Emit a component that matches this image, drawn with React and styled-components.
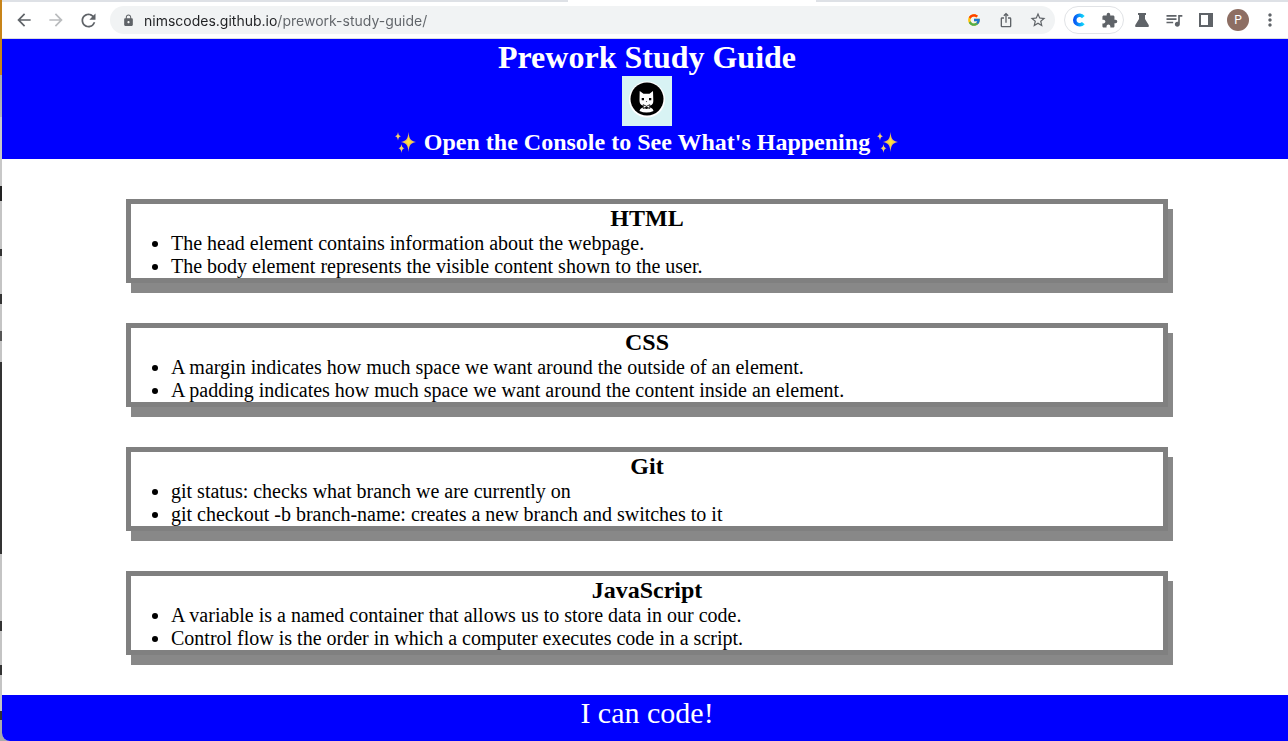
import React from 'react';
import styled, { createGlobalStyle, css } from 'styled-components';
import {
  MdArrowBack, MdArrowForward, MdRefresh, MdLock, MdIosShare, MdStarBorder,
  MdExtension, MdQueueMusic, MdMoreVert,
} from 'react-icons/md';
import { FcGoogle } from 'react-icons/fc';

const GlobalStyle = createGlobalStyle`
  * { box-sizing: border-box; margin: 0; padding: 0; }
  body { background: #fff; font-family: "Liberation Serif", "Times New Roman", serif; }
`;

const Desktop = styled.div`
  display: flex;
  min-height: 100vh;
  overflow: hidden;
  background: linear-gradient(#c88419 75px, #aaa 75px, #b4b4b4 117px, #c8c8c8 117px, #c8c8c8 186px,
    #222 186px, #222 201px, #c4c4c4 201px, #c4c4c4 249px, #333 249px, #333 256px, #c4c4c4 256px,
    #c4c4c4 294px, #333 294px, #333 304px, #c4c4c4 304px, #c4c4c4 331px, #555 331px, #555 341px,
    #c4c4c4 341px, #c4c4c4 362px, #333 362px, #333 554px, #c4c4c4 554px, #c4c4c4 621px, #333 621px,
    #333 631px, #c4c4c4 631px, #c4c4c4 665px, #333 665px, #333 675px, #c4c4c4 675px, #c4c4c4 711px,
    #333 711px, #333 720px, #aaa 720px);
`;

const Browser = styled.div`
  flex: 1;
  min-width: 0;
  margin-left: 2px;
  display: flex;
  flex-direction: column;
  overflow: hidden;
  background: #fff;
  border-bottom-left-radius: 8px;
`;

const TabStrip = styled.div`
  display: flex;
  height: 2px;
  background: #dee1e6;
`;

const ActiveTab = styled.div`
  width: 248px;
  margin-left: 44%;
  background: #fff;
`;

const Toolbar = styled.div`
  display: flex;
  align-items: center;
  height: 37px;
  padding: 0 2px 0 6px;
  border-bottom: 1px solid #dadce0;
  color: #5f6368;
`;

const IconButton = styled.button`
  display: flex;
  align-items: center;
  justify-content: center;
  flex: none;
  width: 32px;
  height: 28px;
  border: 0;
  background: none;
  color: ${p => (p.$muted ? '#babcbe' : '#5f6368')};
`;

const AddressBar = styled.div`
  display: flex;
  align-items: center;
  flex: 1;
  min-width: 0;
  height: 28px;
  margin: 0 9px 0 6px;
  border-radius: 14px;
  padding: 0 1px 0 2px;
  background: #f1f3f4;
`;

const AddressInput = styled.input`
  flex: 1;
  min-width: 0;
  height: 28px;
  border: 0;
  outline: 0;
  color: #202124;
  font: 14px/20px Inter, sans-serif;
  background: linear-gradient(to right, #202124 ${p => p.$host}px, #5f6368 ${p => p.$host}px);
  background-clip: text;
  -webkit-background-clip: text;
  -webkit-text-fill-color: transparent;
`;

const ExtensionGroup = styled.div`
  display: flex;
  justify-content: space-between;
  align-items: center;
  width: 60px;
  height: 28px;
  margin-right: 2px;
  border: 1px solid #e1e3e6;
  border-radius: 14px;
  button { width: 28px; height: 26px; }
`;

const Avatar = styled.span`
  width: 22px;
  height: 22px;
  border-radius: 50%;
  background: #8d6e63;
  color: #fff;
  font: 12px/22px Roboto, sans-serif;
  text-align: center;
`;

const Page = styled.div`
  flex: 1;
  display: flex;
  flex-direction: column;
  margin-right: -4px;
`;

const band = css`
  background: #00f;
  color: #fff;
  text-align: center;
`;

const Header = styled.header`
  ${band}
  display: flex;
  flex-direction: column;
  align-items: center;
  height: 120px;
`;

const Title = styled.h1`
  font-size: 32px;
  line-height: 37px;
`;

const Tagline = styled.h2`
  display: flex;
  align-items: center;
  gap: 6px;
  margin-top: 2px;
  font-size: 24px;
  line-height: 28px;
`;

const Main = styled.main`
  flex: 1;
  display: flex;
  flex-direction: column;
  gap: 40px;
  padding: 40px 124px;
`;

const Card = styled.section`
  border: 5px solid gray;
  box-shadow: 5px 10px #888;
  background: #fff;
  color: #000;
`;

const CardTitle = styled.h2`
  font-size: 24px;
  line-height: 28px;
  text-align: center;
`;

const Notes = styled.ul`
  padding-left: 40px;
  font-size: 20px;
  line-height: 23px;
`;

const Footer = styled.footer`
  ${band}
  height: 46px;
  font-size: 30px;
  line-height: 36px;
`;

const Sparkles = () => (
  <svg width="24" height="24" viewBox="0 0 24 24" fill="#f5cf6b" aria-hidden="true">
    <path d="M14.500 2C15.300 9 16 10.500 22 12C16 13.500 15.300 15 14.500 22C13.700 15 13 13.500 7 12C13 10.500 13.700 9 14.500 2Z" fill="#e9bd62" />
    <path d="M14.500 6C15 10.500 15.800 11.500 19 12C15.800 12.500 15 13.500 14.500 18C14 13.500 13.200 12.500 10 12C13.200 11.500 14 10.500 14.500 6Z" fill="#ffe03a" />
    <path d="M4 2C4.500 5 5 5.500 7 6.200C5 6.800 4.500 7.500 4 10.400C3.500 7.500 3 6.800 1 6.200C3 5.500 3.500 5 4 2Z" />
    <path d="M7.500 14C8 17 8.500 17.500 10.500 18.200C8.500 19 8 19.500 7.500 23C7 19.500 6.500 19 4.500 18.200C6.500 17.500 7 17 7.500 14Z" />
  </svg>
);

const CatLogo = () => (
  <svg width="50" height="50" viewBox="0 0 50 50" role="img" aria-label="Cat wearing a bow tie">
    <path fill="#d8f3f4" d="M0 0H50V50H0Z" />
    <circle cx="25" cy="23.500" r="18" fill="#fff" />
    <circle cx="25" cy="23" r="16.500" fill="#000" />
    <path fill="#fff" d="M17.700 15L21.500 17.700H27.500L31 15L31.300 24.500Q31.500 28.500 28.500 29.500L24.500 30.300L20.500 29.500Q17.500 28.500 17.500 24.500Z" />
    <path fill="#fff" d="M20.500 31.500L24.500 33L28.500 31.500Q31.300 32.500 31.500 35Q24.500 38 17.500 35Q17.700 32.500 20.500 31.500Z" />
    <path fill="#000" d="M19.700 22H22V24.200H19.700ZM27 22H29.300V24.200H27ZM23.800 25.200H25.200L24.500 26.300Z" />
    <path fill="#fff" stroke="#000" strokeWidth="0.800" d="M21.200 28.700L24.500 30.300L27.800 28.700V32.500L24.500 31L21.200 32.500Z" />
  </svg>
);

const ReaderLogo = () => (
  <svg width="14" height="14" viewBox="0 0 14 14" aria-hidden="true">
    <defs>
      <linearGradient id="ring" x1="0" y1="0" x2="1" y2="0">
        <stop offset="0" stopColor="#0759f5" />
        <stop offset="1" stopColor="#10d5fb" />
      </linearGradient>
    </defs>
    <path d="M11.300 4A4.800 4.800 0 1 0 11.300 10" fill="none" stroke="url(#ring)" strokeWidth="3.600" />
  </svg>
);

const Flask = () => (
  <svg width="16" height="16" viewBox="0 0 16 16" fill="currentColor" aria-hidden="true">
    <path d="M4 1H12V3H11V7L14.700 13Q15.500 15 14 15H2Q0.500 15 1.300 13L5 7V3H4Z" />
  </svg>
);

const SidePanel = () => (
  <svg width="14" height="14" viewBox="0 0 14 14" fill="currentColor" fillRule="evenodd" aria-hidden="true">
    <path d="M0 0H14V14H0ZM2 2V12H9V2Z" />
  </svg>
);

const topics = [
  { title: 'HTML', notes: [
    'The head element contains information about the webpage.',
    'The body element represents the visible content shown to the user.'] },
  { title: 'CSS', notes: [
    'A margin indicates how much space we want around the outside of an element.',
    'A padding indicates how much space we want around the content inside an element.'] },
  { title: 'Git', notes: [
    'git status: checks what branch we are currently on',
    'git checkout -b branch-name: creates a new branch and switches to it'] },
  { title: 'JavaScript', notes: [
    'A variable is a named container that allows us to store data in our code.',
    'Control flow is the order in which a computer executes code in a script.'] },
];

export default function App() {
  return (
    <>
      <GlobalStyle />
      <Desktop>
        <Browser>
          <TabStrip><ActiveTab /></TabStrip>
          <Toolbar>
            <IconButton aria-label="Back"><MdArrowBack size={20} /></IconButton>
            <IconButton aria-label="Forward" $muted><MdArrowForward size={20} /></IconButton>
            <IconButton aria-label="Reload"><MdRefresh size={21} /></IconButton>
            <AddressBar>
              <IconButton aria-label="Site information"><MdLock size={13} /></IconButton>
              <AddressInput
                aria-label="Address"
                type="text"
                $host={133}
                defaultValue="nimscodes.github.io/prework-study-guide/"
              />
              <IconButton aria-label="Google"><FcGoogle size={14} /></IconButton>
              <IconButton aria-label="Share"><MdIosShare size={16} /></IconButton>
              <IconButton aria-label="Bookmark"><MdStarBorder size={18} /></IconButton>
            </AddressBar>
            <ExtensionGroup>
              <IconButton aria-label="Reader extension"><ReaderLogo /></IconButton>
              <IconButton aria-label="Extensions"><MdExtension size={17} /></IconButton>
            </ExtensionGroup>
            <IconButton aria-label="Experiments"><Flask /></IconButton>
            <IconButton aria-label="Media"><MdQueueMusic size={20} /></IconButton>
            <IconButton aria-label="Side panel"><SidePanel /></IconButton>
            <IconButton aria-label="Profile"><Avatar>P</Avatar></IconButton>
            <IconButton aria-label="Menu"><MdMoreVert size={20} /></IconButton>
          </Toolbar>
          <Page>
            <Header>
              <Title>Prework Study Guide</Title>
              <CatLogo />
              <Tagline><Sparkles />Open the Console to See What's Happening<Sparkles /></Tagline>
            </Header>
            <Main>
              {topics.map(topic => (
                <Card key={topic.title}>
                  <CardTitle>{topic.title}</CardTitle>
                  <Notes>{topic.notes.map(note => <li key={note}>{note}</li>)}</Notes>
                </Card>
              ))}
            </Main>
            <Footer>I can code!</Footer>
          </Page>
        </Browser>
      </Desktop>
    </>
  );
}
